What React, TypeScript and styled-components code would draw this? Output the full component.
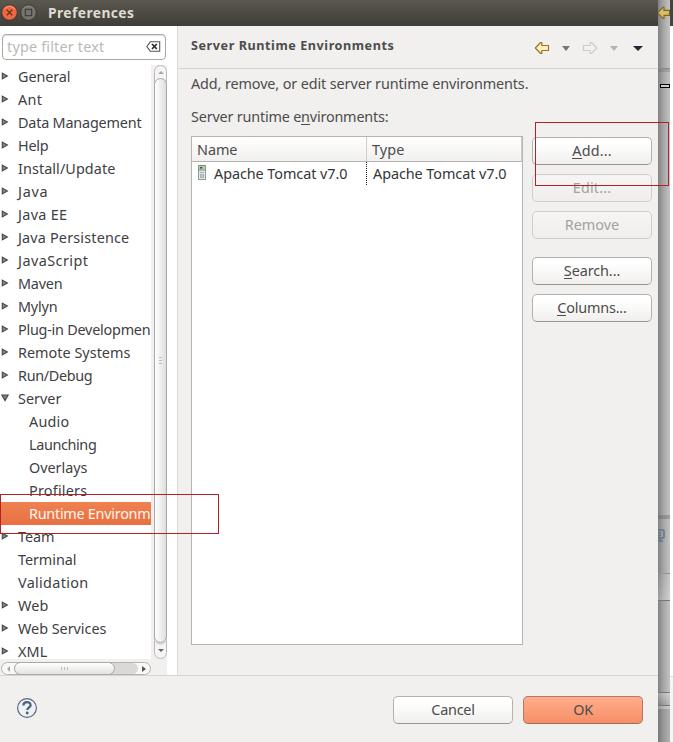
import React, { useLayoutEffect, useRef, useState } from "react";
import styled, { createGlobalStyle, css } from "styled-components";

const GlobalStyle = createGlobalStyle`
  * { box-sizing: border-box; }
  html, body { margin: 0; padding: 0; overflow: hidden; }
  body { font-family: "Noto Sans", "Open Sans", sans-serif; font-size: 14.4px; color: #3e4042; }
`;

/* Text whose tracking is adjusted so that it takes a given width. */
const Tracked = styled.span`
  display: inline-block;
  white-space: pre;
`;

const Key = styled.span`
  box-shadow: inset 0 -1px 0 #4c4c4c;
  display: inline-block;
  height: 17px;
  line-height: 17px;
`;

function Fit({ w, children }: { w: number; children: React.ReactNode }) {
  const ref = useRef<HTMLSpanElement>(null);
  const [spacing, setSpacing] = useState(0);
  useLayoutEffect(() => {
    const el = ref.current;
    if (!el) return;
    const count = (el.textContent || "").length;
    const natural = el.getBoundingClientRect().width;
    setSpacing((w + 0.4 - natural) / count);
  }, []);
  return (
    <Tracked ref={ref} style={{ letterSpacing: spacing }}>
      {children}
    </Tracked>
  );
}

const Screen = styled.div`
  position: relative;
  display: flex;
  width: 673px;
  height: 742px;
  overflow: hidden;
  background: #fff;
`;

const Window = styled.div`
  display: flex;
  flex-direction: column;
  width: 658px;
  height: 742px;
  background: #f1f0ee;
`;

const TitleBar = styled.div`
  display: flex;
  align-items: center;
  height: 26px;
  padding: 0 0 1px 1px;
  gap: 2px;
  background: linear-gradient(#5a584f, #3e3d38);
  color: #dfdbd2;
  font-size: 13.8px;
  font-weight: 700;
`;

const Title = styled.div`
  margin-left: 9px;
  line-height: 26px;
`;

const Body = styled.div`
  display: flex;
  height: 650px;
  border-bottom: 1px solid #d5d4d2;
`;

const Sidebar = styled.div`
  display: flex;
  flex-direction: column;
  width: 178px;
  background: #fff;
  border-right: 1px solid #dcdbd9;
`;

const Filter = styled.div`
  display: flex;
  align-items: center;
  justify-content: space-between;
  width: 164px;
  height: 26px;
  margin: 8px 0 5px 2px;
  padding: 0 4px 1px 4px;
  border: 1px solid #a9a8a4;
  border-radius: 4px;
  box-shadow: inset 0 1px 1px #e0dfdc;
  color: #bbb9b6;
`;

const TreeArea = styled.div`
  display: flex;
  height: 594px;
`;

const Tree = styled.div`
  width: 151px;
  height: 594px;
  overflow-x: clip;
  overflow-y: visible;
`;

const Row = styled.div<{ $child?: boolean; $selected?: boolean }>`
  display: flex;
  align-items: center;
  height: 23px;
  line-height: 15px;
  ${(p) =>
    p.$selected &&
    css`
      background: linear-gradient(#f08150, #e87042);
      color: #fff6ef;
    `}
  padding-left: ${(p) => (p.$child ? 29 : 0)}px;
`;

const Arrow = styled.span`
  display: flex;
  width: 18px;
  flex: none;
  padding: 0 0 2px 1px;
`;

const VScroll = styled.div`
  display: flex;
  flex-direction: column;
  width: 16px;
  padding: 0 0 0 3px;
  background: #f1f0ee;
`;

const VTrack = styled.div`
  display: flex;
  flex-direction: column;
  align-items: center;
  justify-content: space-between;
  width: 13px;
  height: 594px;
  border: 1px solid #bcbab7;
  border-radius: 7px;
  background: #f6f5f4;
`;

const VThumb = styled.div`
  display: flex;
  align-items: center;
  justify-content: center;
  width: 13px;
  height: 565px;
  border: 1px solid #aaa8a5;
  border-radius: 7px;
  background: linear-gradient(90deg, #fff, #dfdedc);
  box-shadow: 0 2px 0 #dcdad8;
`;

const Cap = styled.div<{ $h: number }>`
  display: flex;
  align-items: center;
  justify-content: center;
  height: ${(p) => p.$h}px;
`;

const HScroll = styled.div`
  width: 167px;
  height: 16px;
  padding: 3px 0 0 1px;
  background: #f1f0ee;
`;

const HTrack = styled.div`
  display: flex;
  align-items: center;
  width: 150px;
  height: 13px;
  border: 1px solid #b5b3b0;
  border-radius: 7px;
  background: #f8f8f7;
`;

const HTrough = styled.div`
  width: 124px;
  height: 11px;
  display: flex;
  align-items: center;
  background: #dad9d7;
  border-radius: 7px;
`;

const HThumb = styled.div`
  display: flex;
  align-items: center;
  justify-content: center;
  width: 101px;
  height: 13px;
  border: 1px solid #aaa8a5;
  border-radius: 7px;
  background: linear-gradient(#fff, #e3e2e0);
`;

const HCap = styled.div`
  display: flex;
  width: 12px;
  justify-content: center;
`;

const Page = styled.div`
  flex: 1;
  display: flex;
  flex-direction: column;
  color: #4c4c4c;
`;

const PageHeader = styled.div`
  display: flex;
  justify-content: space-between;
  height: 43px;
  margin-left: 1px;
  padding: 0 15px 0 12px;
  border-bottom: 1px solid #d3d2d0;
  font-size: 12.6px;
  font-weight: 700;
  line-height: 40px;
`;

const NavIcons = styled.div`
  display: flex;
  align-items: center;
  padding-top: 2px;
`;

const Line = styled.div<{ $top: number }>`
  height: 20px;
  margin: ${(p) => p.$top}px 0 0 13px;
  line-height: 20px;
`;

const Content = styled.div`
  display: flex;
  gap: 9px;
  margin: 9px 0 0 13px;
`;

const Table = styled.div`
  width: 332px;
  height: 509px;
  background: #fff;
  border: 1px solid #b6b4b1;
`;

const HeadRow = styled.div`
  display: flex;
  height: 25px;
  line-height: 25px;
  border-bottom: 1px solid #b6b4b1;
  background: linear-gradient(#fff, #f1f0ee);
`;

const HeadCell = styled.div<{ $w: number }>`
  width: ${(p) => p.$w}px;
  padding-left: 5px;
  border-right: 1px solid #cfcdca;
`;

const DataRow = styled.div`
  display: flex;
  height: 23px;
  line-height: 23px;
  color: #333638;
`;

const NameCell = styled.div`
  display: flex;
  width: 175px;
  padding-left: 6px;
  gap: 8px;
  border-right: 1px dotted #222;
`;

const TypeCell = styled.div`
  padding-left: 6px;
`;

const Buttons = styled.div`
  display: flex;
  flex-direction: column;
  gap: 9px;
  padding-top: 1px;
`;

const Button = styled.button<{ $primary?: boolean; $gap?: boolean }>`
  display: flex;
  align-items: center;
  justify-content: center;
  width: 120px;
  height: 28px;
  padding: 0 0 1px;
  margin-top: ${(p) => (p.$gap ? 9 : 0)}px;
  border: 1px solid ${(p) => (p.$primary ? "#b27a62" : "#b4b2af")};
  border-bottom-color: ${(p) => (p.$primary ? "#a36c55" : "#989693")};
  border-radius: 5px;
  background: ${(p) =>
    p.$primary ? "linear-gradient(#ffad8c, #f68f67)" : "linear-gradient(#fff 20%, #f0efed)"};
  color: #4c4c4c;
  font: inherit;
  &:disabled {
    border-color: #d0cecb;
    background: linear-gradient(#f6f5f4, #efeeec);
    color: #a3a19f;
  }
`;

const Footer = styled.div`
  display: flex;
  align-items: center;
  height: 66px;
  padding: 2px 15px 0 16px;
  gap: 10px;
`;

const HelpIcon = styled.svg`
  margin-bottom: 4px;
`;

const Spacer = styled.div`
  flex: 1;
`;

const Backdrop = styled.div`
  display: flex;
  flex-direction: column;
  width: 12px;
  height: 742px;
  background: linear-gradient(90deg, #828282, #a5a5a5 45%, #c4c4c4);
`;

const Band = styled.div<{ $h: number; $bg?: string; $line?: string }>`
  flex: none;
  height: ${(p) => p.$h}px;
  overflow: hidden;
  background: ${(p) => p.$bg || "transparent"};
  border-bottom: ${(p) => (p.$line ? `1px solid ${p.$line}` : "0")};
`;

const Edge = styled.div`
  width: 3px;
  height: 742px;
  background: linear-gradient(#45443e 0 26px, #fff 26px 676px, #dddddb 676px 677px, #f5f5f4 677px);
`;

const Highlight = styled.div<{ $x: number; $y: number; $w: number; $h: number }>`
  position: absolute;
  left: ${(p) => p.$x}px;
  top: ${(p) => p.$y}px;
  width: ${(p) => p.$w}px;
  height: ${(p) => p.$h}px;
  border: 1px solid #b52025;
`;

const Mark = styled.span<{ $l: number }>`
  display: flex;
  margin-left: ${(p) => p.$l}px;
`;

const DropGap = styled.span`
  width: 12px;
`;

const IconBox = styled.span`
  display: flex;
  align-items: flex-start;
  width: 8px;
  padding-top: 3px;
`;

const Tri = ({ dir, color, w = 7, h = 5 }: { dir: "up" | "down" | "left" | "right"; color: string; w?: number; h?: number }) => {
  const points = {
    up: `0,${h} ${w},${h} ${w / 2},0`,
    down: `0,0 ${w},0 ${w / 2},${h}`,
    left: `${w},0 ${w},${h} 0,${h / 2}`,
    right: `0,0 0,${h} ${w},${h / 2}`,
  }[dir];
  return (
    <svg width={w} height={h}>
      <polygon points={points} fill={color} />
    </svg>
  );
};

function DropMark({ color, $l, big }: { color: string; $l: number; big?: boolean }) {
  return (
    <Mark $l={$l}>
      <Tri dir="down" color={color} w={big ? 10 : 8} h={5} />
    </Mark>
  );
}

function ServerIcon() {
  return (
    <IconBox>
      <svg width="8" height="15" viewBox="0 0 8 15">
        <path d="M.5.5h7v14h-7z" fill="#e4e9e8" stroke="#8b9a94" />
        <path d="M1 1h6v3.5H1z" fill="#b9cfb4" />
        <path d="M.5.5h7M.5 5h7" stroke="#6d8f70" />
        <path d="M2 2.8h2.4" stroke="#2f6136" strokeWidth="1.6" />
        <path d="M2 7.5h4" stroke="#a3aeb6" />
        <path d="M2.5 9.5h3v3h-3z" fill="#c3cbd8" stroke="#a2abb9" />
      </svg>
    </IconBox>
  );
}

const Expander = ({ open }: { open?: boolean }) => (
  <svg width="8" height="8" viewBox="0 0 8 8">
    <path
      d={open ? "M.8 1h6.4L4 6.6z" : "M1.3 1.1v5.8L6.4 4z"}
      fill="#858585"
      stroke="#454545"
      strokeWidth="1.1"
    />
  </svg>
);

const NavArrow = ({ flip, fill, stroke }: { flip?: boolean; fill: string; stroke: string }) => (
  <svg width="16" height="14" viewBox="0 0 16 14">
    <path
      transform={flip ? "translate(16 0) scale(-1 1)" : undefined}
      d="M1.3 7 6.6 1.5h1.2V4.5h6.7v5H7.8v3H6.6z"
      fill={fill}
      stroke={stroke}
      strokeWidth="1.2"
      strokeLinejoin="round"
    />
  </svg>
);

const Grip = ({ vertical }: { vertical?: boolean }) => (
  <svg width="9" height="9" viewBox="0 0 9 9">
    <path
      d={vertical ? "M3 1.5h3M3 4.5h3M3 7.5h3" : "M1.5 3v3M4.5 3v3M7.5 3v3"}
      stroke="#bdbbb8"
    />
  </svg>
);

const WinButton = ({ close }: { close?: boolean }) => (
  <svg width="17" height="17" viewBox="0 0 16 16">
    <circle cx="8" cy="8" r="7.3" fill={close ? "#ed6740" : "#76746c"} stroke="#35342f" strokeWidth=".8" />
    <path d="M3 5a6 6 0 0 1 10 0" fill="none" stroke={close ? "#f59170" : "#88867d"} />
    {close ? (
      <path d="m5.4 5.4 5.2 5.2m0-5.2-5.2 5.2" stroke="#6b2c18" strokeWidth="1.1" />
    ) : (
      <rect x="5" y="5" width="6" height="6" fill="none" stroke="#393833" strokeWidth="1" />
    )}
  </svg>
);

type Item = { t: string; w: number; child?: boolean; open?: boolean; leaf?: boolean; sel?: boolean };
const items: Item[] = [
  { t: "General", w: 52 },
  { t: "Ant", w: 24 },
  { t: "Data Management", w: 123 },
  { t: "Help", w: 30 },
  { t: "Install/Update", w: 97 },
  { t: "Java", w: 30 },
  { t: "Java EE", w: 49 },
  { t: "Java Persistence", w: 111 },
  { t: "JavaScript", w: 70 },
  { t: "Maven", w: 44 },
  { t: "Mylyn", w: 39 },
  { t: "Plug-in Developmen", w: 132 },
  { t: "Remote Systems", w: 112 },
  { t: "Run/Debug", w: 74 },
  { t: "Server", w: 43, open: true },
  { t: "Audio", w: 40, child: true },
  { t: "Launching", w: 67, child: true },
  { t: "Overlays", w: 58, child: true },
  { t: "Profilers", w: 58, child: true },
  { t: "Runtime Environm", w: 121, child: true, sel: true },
  { t: "Team", w: 36 },
  { t: "Terminal", w: 58, leaf: true },
  { t: "Validation", w: 70, leaf: true },
  { t: "Web", w: 30 },
  { t: "Web Services", w: 88 },
  { t: "XML", w: 29 },
];

export default function App() {
  return (
    <Screen>
      <GlobalStyle />
      <Window>
        <TitleBar>
          <WinButton close />
          <WinButton />
          <Title>
            <Fit w={86}>Preferences</Fit>
          </Title>
        </TitleBar>
        <Body>
          <Sidebar>
            <Filter>
              <Fit w={97}>type filter text</Fit>
              <svg width="15" height="11" viewBox="0 0 15 11">
                <path d="M.8 5.5 4.3.8h9.4v9.4H4.3z" fill="#fff" stroke="#555" strokeWidth="1.1" />
                <path d="m6 3 4.8 5m0-5L6 8" stroke="#333" strokeWidth="1.8" />
              </svg>
            </Filter>
            <TreeArea>
              <Tree>
                {items.map((it) => (
                  <Row key={it.t} $child={it.child} $selected={it.sel}>
                    {!it.child && <Arrow>{!it.leaf && <Expander open={it.open} />}</Arrow>}
                    <Fit w={it.w}>{it.t}</Fit>
                  </Row>
                ))}
              </Tree>
              <VScroll>
                <VTrack>
                  <Cap $h={12}>
                    <Tri dir="up" color="#aaa8a5" w={6} h={3} />
                  </Cap>
                  <VThumb>
                    <Grip vertical />
                  </VThumb>
                  <Cap $h={15}>
                    <Tri dir="down" color="#666" w={6} h={3} />
                  </Cap>
                </VTrack>
              </VScroll>
            </TreeArea>
            <HScroll>
              <HTrack>
                <HCap>
                  <Tri dir="left" color="#aaa8a5" w={3} h={6} />
                </HCap>
                <HTrough>
                  <HThumb>
                    <Grip />
                  </HThumb>
                </HTrough>
                <HCap>
                  <Tri dir="right" color="#555" w={4} h={6} />
                </HCap>
              </HTrack>
            </HScroll>
          </Sidebar>
          <Page>
            <PageHeader>
              <Fit w={203}>Server Runtime Environments</Fit>
              <NavIcons>
                <NavArrow fill="#fff3b2" stroke="#997037" />
                <DropMark color="#777" $l={12} />
                <DropGap />
                <NavArrow flip fill="#f2f1ef" stroke="#cfcdcb" />
                <DropMark color="#b5b3b1" $l={12} />
                <DropMark color="#2c2136" $l={15} big />
              </NavIcons>
            </PageHeader>
            <Line $top={5}>
              <Fit w={337}>Add, remove, or edit server runtime environments.</Fit>
            </Line>
            <Line $top={13}>
              <Fit w={197}>
                Server runtime e<Key>n</Key>vironments:
              </Fit>
            </Line>
            <Content>
              <Table>
                <HeadRow>
                  <HeadCell $w={175}>
                    <Fit w={40}>Name</Fit>
                  </HeadCell>
                  <HeadCell $w={155}>
                    <Fit w={32}>Type</Fit>
                  </HeadCell>
                </HeadRow>
                <DataRow>
                  <NameCell>
                    <ServerIcon />
                    <Fit w={133}>Apache Tomcat v7.0</Fit>
                  </NameCell>
                  <TypeCell>
                    <Fit w={133}>Apache Tomcat v7.0</Fit>
                  </TypeCell>
                </DataRow>
              </Table>
              <Buttons>
                <Button>
                  <Fit w={39}><Key>A</Key>dd...</Fit>
                </Button>
                <Button disabled>
                  <Fit w={38}>Edit...</Fit>
                </Button>
                <Button disabled>
                  <Fit w={54}>Remove</Fit>
                </Button>
                <Button $gap>
                  <Fit w={56}><Key>S</Key>earch...</Fit>
                </Button>
                <Button>
                  <Fit w={69}><Key>C</Key>olumns...</Fit>
                </Button>
              </Buttons>
            </Content>
          </Page>
        </Body>
        <Footer>
          <HelpIcon width="22" height="22" viewBox="0 0 22 22">
            <circle cx="11" cy="11" r="9.4" fill="#eef2f7" stroke="#56687d" strokeWidth="1.2" />
            <path d="M7.4 8.4c0-4.2 7.4-4.2 7.2-.3-.1 2.6-3.3 2.6-3.3 5" fill="none" stroke="#4d6178" strokeWidth="2.3" />
            <circle cx="11.2" cy="16" r="1.4" fill="#4d6178" />
          </HelpIcon>
          <Spacer />
          <Button>
            <Fit w={43}>Cancel</Fit>
          </Button>
          <Button $primary>
            <Fit w={19}>OK</Fit>
          </Button>
        </Footer>
      </Window>
      <Backdrop>
        <Band $h={26}>
          <svg width="12" height="26" viewBox="0 0 12 26">
            <path d="M-.5 12.8 5 7.3h1v3h5.5v5H6v3H5z" fill="#d7bf63" stroke="#80642c" strokeWidth="1.2" />
          </svg>
        </Band>
        <Band $h={43} $line="#888" />
        <Band $h={3} $bg="rgba(90,90,90,.25)" />
        <Band $h={24}>
          <svg width="12" height="24" viewBox="0 0 12 24">
            <rect x="2.5" y="12.5" width="9" height="3" fill="#ccc" stroke="#000" />
          </svg>
        </Band>
        <Band $h={419} />
        <Band $h={4} $bg="rgba(80,80,80,.3)" />
        <Band $h={55} $line="#919191">
          <svg width="12" height="54" viewBox="0 0 12 54">
            <path d="M0 11h5q1 0 1 1v6q0 1-1 1H0M0 22h5M2 19v3M0 14h3M0 16.5h3" fill="none" stroke="#63758a" strokeWidth="1.5" />
          </svg>
        </Band>
        <Band $h={27} $bg="linear-gradient(rgba(255,255,255,.05),rgba(255,255,255,.22))" $line="#777" />
        <Band $h={92} $line="#777" />
        <Band $h={13} $bg="linear-gradient(rgba(255,255,255,.25),rgba(0,0,0,.06))" $line="#777" />
        <Band $h={3} $bg="rgba(255,255,255,.18)" />
        <Band $h={33} $bg="rgba(60,60,60,.13)" />
      </Backdrop>
      <Edge />
      <Highlight $x={535} $y={122} $w={134} $h={64} />
      <Highlight $x={0} $y={494} $w={219} $h={40} />
    </Screen>
  );
}
